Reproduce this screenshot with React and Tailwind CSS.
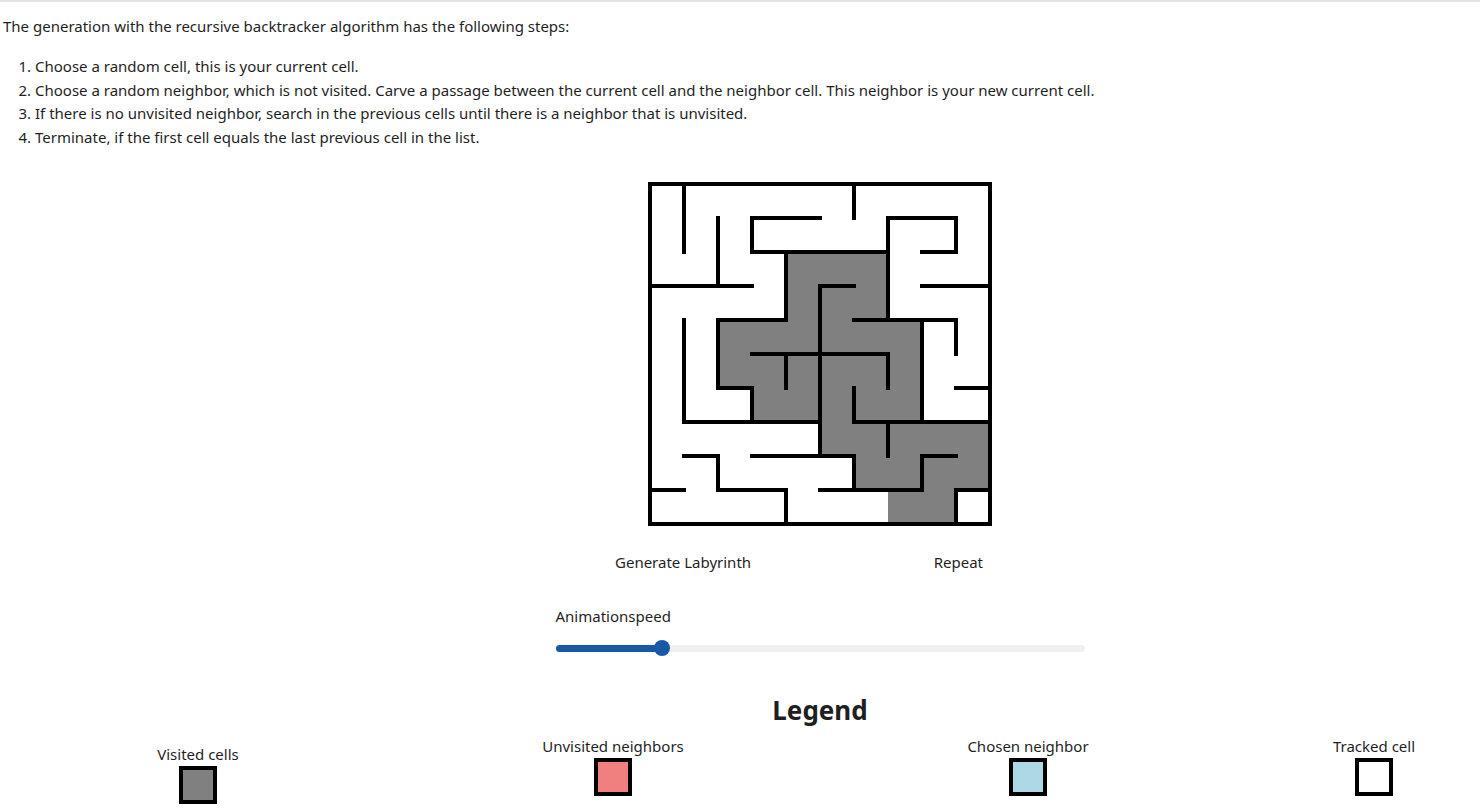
import React from "react";

const CELL = 34;

// grey cells of the current generation state: [col, row]
const visited = [
  [4, 2], [5, 2], [6, 2],
  [4, 3], [5, 3], [6, 3],
  [2, 4], [3, 4], [4, 4], [5, 4], [6, 4], [7, 4],
  [2, 5], [3, 5], [4, 5], [5, 5], [6, 5], [7, 5],
  [3, 6], [4, 6], [5, 6], [6, 6], [7, 6],
  [5, 7], [6, 7], [7, 7], [8, 7], [9, 7],
  [6, 8], [7, 8], [8, 8], [9, 8],
  [7, 9], [8, 9],
];

// walls in grid units: [x1, y1, x2, y2]
const walls = [
  [1, 0, 1, 2], [2, 1, 2, 3], [0, 3, 3, 3],
  [3, 1, 5, 1], [3, 1, 3, 2], [3, 2, 7, 2],
  [6, 0, 6, 1],
  [7, 1, 7, 4], [7, 1, 9, 1], [9, 1, 9, 2], [8, 2, 9, 2],
  [4, 2, 4, 4], [2, 4, 4, 4], [2, 4, 2, 6], [2, 6, 3, 6], [3, 6, 3, 7],
  [5, 3, 6, 3], [5, 3, 5, 8],
  [6, 4, 9, 4], [8, 4, 8, 7], [9, 4, 9, 5],
  [8, 3, 10, 3],
  [1, 4, 1, 7], [1, 7, 5, 7],
  [3, 5, 7, 5], [4, 5, 4, 6], [7, 5, 7, 6],
  [6, 6, 6, 7], [6, 7, 10, 7],
  [9, 6, 10, 6],
  [7, 7, 7, 8],
  [1, 8, 2, 8], [2, 8, 2, 9], [2, 9, 4, 9], [4, 9, 4, 10],
  [3, 8, 6, 8], [6, 8, 6, 9], [5, 9, 8, 9], [8, 8, 8, 9], [8, 8, 9, 8],
  [0, 9, 1, 9],
  [9, 9, 10, 9], [9, 9, 9, 10],
];

const Maze = () => {
  return (
    <svg width="344" height="344" viewBox="-2 -2 344 344" className="block">
      <rect x="0" y="0" width="340" height="340" fill="#ffffff" />
      {visited.map(([c, r]) => (
        <rect key={`${c}-${r}`} x={c * CELL} y={r * CELL} width={CELL} height={CELL} fill="#808080" />
      ))}
      {walls.map(([x1, y1, x2, y2], i) => (
        <line
          key={i}
          x1={x1 * CELL}
          y1={y1 * CELL}
          x2={x2 * CELL}
          y2={y2 * CELL}
          stroke="#000"
          strokeWidth="4"
          strokeLinecap="square"
        />
      ))}
      <rect x="0" y="0" width="340" height="340" fill="none" stroke="#000" strokeWidth="4" />
    </svg>
  );
};

const LegendItem = ({ label, color, className }) => {
  return (
    <div className={`flex flex-col items-center ${className}`}>
      <span className="leading-[24px]">{label}</span>
      <div className={`w-[38px] h-[38px] border-4 border-black ${color}`}></div>
    </div>
  );
};

export default function App() {
  return (
    <div className="min-h-screen bg-white border-t-2 border-[#e2e2e2] text-[15px] leading-[24px] text-[#1f1f1f] font-['Noto_Sans',sans-serif]">
      {/* Intro */}
      <p className="pl-[3px] pt-[12px]">
        The generation with the recursive backtracker algorithm has the following steps:
      </p>
      <ol className="list-decimal pl-[35px] mt-[17px] leading-[23.6px]">
        <li>Choose a random cell, this is your current cell.</li>
        <li>
          Choose a random neighbor, which is not visited. Carve a passage between the current cell and the neighbor
          cell. This neighbor is your new current cell.
        </li>
        <li>If there is no unvisited neighbor, search in the previous cells until there is a neighbor that is unvisited.</li>
        <li>Terminate, if the first cell equals the last previous cell in the list.</li>
      </ol>

      {/* Maze + controls */}
      <div className="pl-[160px] flex flex-col items-center">
        <div className="mt-[33px]">
          <Maze />
        </div>
        <div className="mt-[24px] w-[368px] mr-[42px] flex justify-between">
          <button className="leading-[24px]">Generate Labyrinth</button>
          <button className="leading-[24px]">Repeat</button>
        </div>
        <div className="mt-[30px] w-[529px]">
          <div className="leading-[24px]">Animationspeed</div>
          <div className="relative mt-[12px] h-[16px] flex items-center">
            <div className="w-full h-[7px] rounded-full bg-[#f0f0f0]">
              <div className="w-[106px] h-full rounded-full bg-[#1759a6]"></div>
            </div>
            <div className="absolute left-[98px] top-0 w-[16px] h-[16px] rounded-full bg-[#1759a6]"></div>
          </div>
        </div>
        <h2 className="mt-[38px] text-[26px] leading-[32px] font-bold text-[#1f1f1f]">Legend</h2>
      </div>

      {/* Legend */}
      <div className="flex mt-[8px]">
        <LegendItem label="Visited cells" color="bg-[#808080]" className="w-[396px] mt-[8px]" />
        <LegendItem label="Unvisited neighbors" color="bg-[#f08080]" className="w-[434px]" />
        <LegendItem label="Chosen neighbor" color="bg-[#add8e6]" className="w-[396px]" />
        <LegendItem label="Tracked cell" color="bg-white" className="ml-[42px] w-[212px]" />
      </div>
    </div>
  );
}
